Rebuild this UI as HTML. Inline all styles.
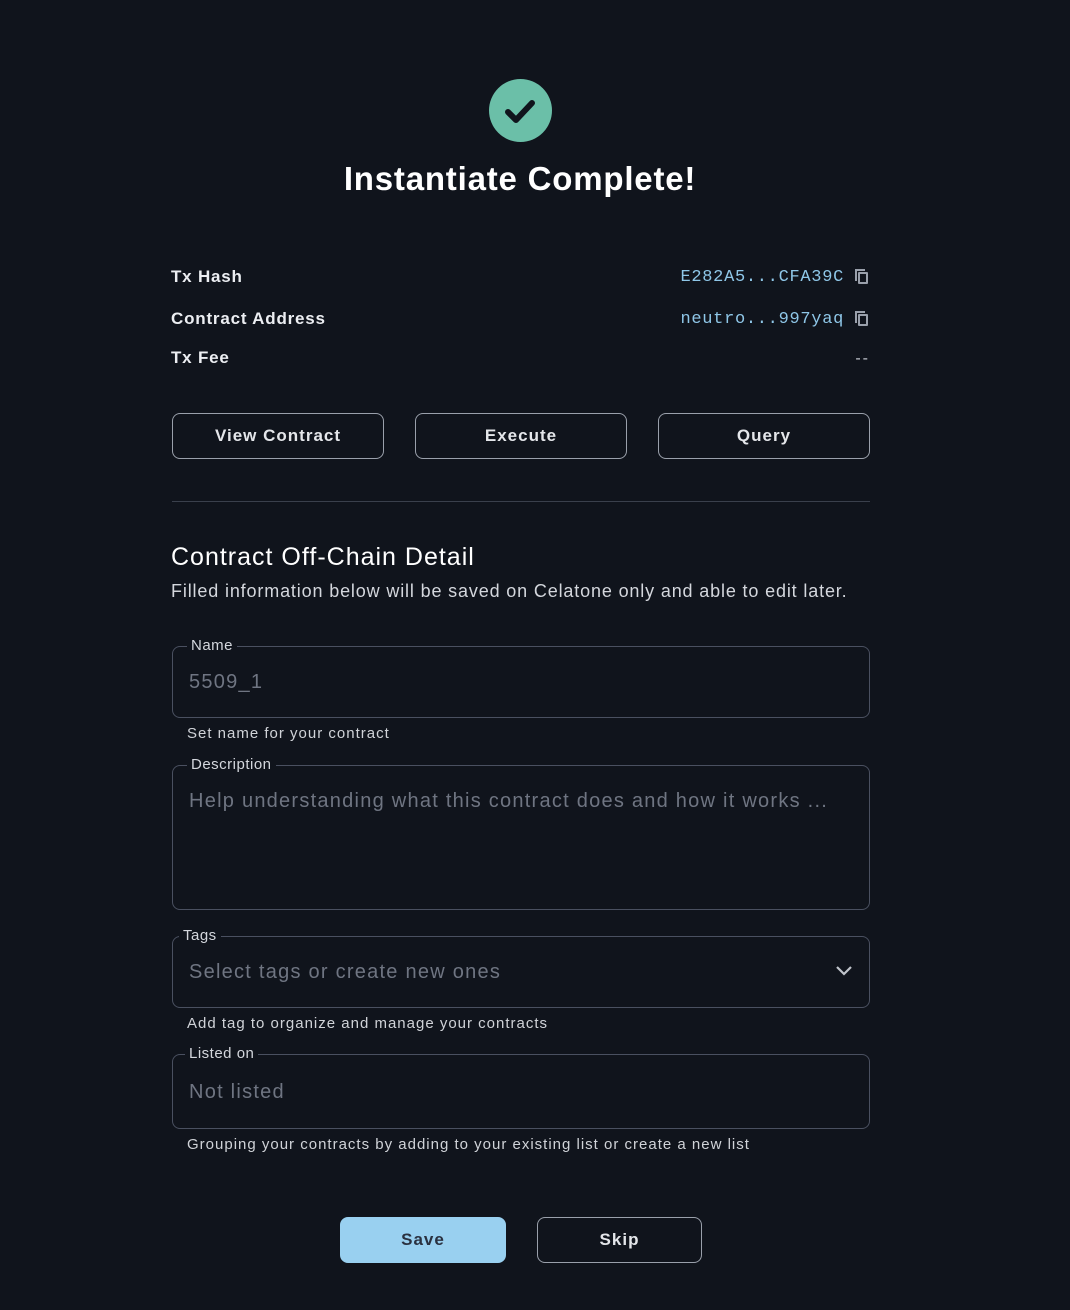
<!DOCTYPE html>
<html><head><meta charset="utf-8"><style>
*{box-sizing:border-box;margin:0;padding:0}
body{width:1070px;height:1310px;background:#10141c;font-family:"Liberation Sans",sans-serif;color:#f1f2f4;position:relative;overflow:hidden}
.a{position:absolute}
.lbl{font-size:17px;font-weight:bold;color:#eceef2;letter-spacing:0.8px}
.mono{font-family:"Liberation Mono",monospace;font-size:17px;color:#8fc7e8;letter-spacing:0.7px}
.btn{position:absolute;border:1.5px solid #9aa0ab;border-radius:8px;height:46px;display:flex;align-items:center;justify-content:center;font-weight:bold;font-size:17px;color:#e4e6ea;letter-spacing:1px}
.field{position:absolute;left:172px;width:698px;border:1px solid #4a5060;border-radius:8px}
.flab{position:absolute;top:-10px;left:14px;background:#10141c;padding:0 4px;font-size:15px;color:#d4d7dd;letter-spacing:0.5px}
.ph{position:absolute;left:16px;font-size:20px;color:#6f7582;letter-spacing:1.25px;white-space:nowrap}
.help{position:absolute;left:187px;font-size:15px;color:#d0d3d8;letter-spacing:1px}
.copy{position:absolute;width:10px;height:12px;border:2px solid #9aa0ab;border-radius:1px}
</style></head><body>
<div class="a" style="left:489px;top:79px;width:63px;height:63px;border-radius:50%;background:#6bbfa8"></div>
<svg class="a" style="left:489px;top:79px" width="63" height="63"><path d="M19 33 L27 41 L43 24" stroke="#10141c" stroke-width="6" fill="none" stroke-linecap="round" stroke-linejoin="round"/></svg>
<div class="a" style="left:0;width:1040px;top:160px;text-align:center;font-size:33px;font-weight:bold;color:#fff;letter-spacing:0.8px">Instantiate Complete!</div>

<div class="a lbl" style="left:171px;top:267px">Tx Hash</div>
<div class="a lbl" style="left:171px;top:309px">Contract Address</div>
<div class="a lbl" style="left:171px;top:348px">Tx Fee</div>
<div class="a mono" style="right:226px;top:268px">E282A5...CFA39C</div>
<div class="a mono" style="right:226px;top:310px">neutro...997yaq</div>
<div class="copy" style="left:858px;top:272px"></div><div class="a" style="left:855px;top:269px;width:2px;height:12px;background:#9aa0ab"></div><div class="a" style="left:855px;top:269px;width:10px;height:2px;background:#9aa0ab"></div>
<div class="copy" style="left:858px;top:314px"></div><div class="a" style="left:855px;top:311px;width:2px;height:12px;background:#9aa0ab"></div><div class="a" style="left:855px;top:311px;width:10px;height:2px;background:#9aa0ab"></div>
<div class="a" style="right:200px;top:350px;color:#c0c4cb;font-size:16px;letter-spacing:2px">--</div>

<div class="btn" style="left:172px;top:413px;width:212px">View Contract</div>
<div class="btn" style="left:415px;top:413px;width:212px">Execute</div>
<div class="btn" style="left:658px;top:413px;width:212px">Query</div>
<div class="a" style="left:172px;top:501px;width:698px;height:1px;background:#3a404c"></div>

<div class="a" style="left:171px;top:543px;font-size:25px;color:#fff;letter-spacing:1px">Contract Off-Chain Detail</div>
<div class="a" style="left:171px;top:581px;font-size:18px;color:#d4d7dd;letter-spacing:0.85px">Filled information below will be saved on Celatone only and able to edit later.</div>

<div class="field" style="top:646px;height:72px"><span class="flab">Name</span><span class="ph" style="top:24px">5509_1</span></div>
<div class="help" style="top:725px">Set name for your contract</div>
<div class="field" style="top:765px;height:145px"><span class="flab">Description</span><span class="ph" style="top:24px">Help understanding what this contract does and how it works ...</span></div>
<div class="field" style="top:936px;height:72px"><span class="flab" style="left:6px">Tags</span><span class="ph" style="top:24px">Select tags or create new ones</span>
<svg class="a" style="right:16px;top:28px" width="18" height="12"><path d="M2 2 L9 9 L16 2" stroke="#c0c4cb" stroke-width="2.2" fill="none"/></svg></div>
<div class="help" style="top:1015px">Add tag to organize and manage your contracts</div>
<div class="field" style="top:1054px;height:75px"><span class="flab" style="left:12px">Listed on</span><span class="ph" style="top:26px">Not listed</span></div>
<div class="help" style="top:1136px">Grouping your contracts by adding to your existing list or create a new list</div>

<div class="btn" style="left:340px;top:1217px;width:166px;background:#99d0f0;border-color:#99d0f0;color:#2a3140">Save</div>
<div class="btn" style="left:537px;top:1217px;width:165px">Skip</div>
</body></html>
